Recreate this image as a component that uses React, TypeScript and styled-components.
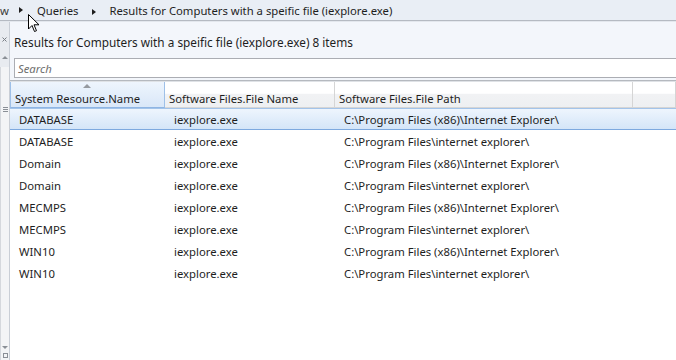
import styled, { createGlobalStyle } from "styled-components";

const GlobalStyle = createGlobalStyle`
  html, body {
    margin: 0;
    padding: 0;
    background: #ffffff;
  }
  body {
    font-family: "Noto Sans", "Open Sans", "Liberation Sans", sans-serif;
    font-size: 11.3px;
    color: #1e1e1e;
  }
`;

const Screen = styled.div`
  position: relative;
  width: 676px;
  height: 360px;
  display: flex;
  flex-direction: column;
  overflow: hidden;
`;

const Breadcrumbs = styled.div`
  height: 20px;
  display: flex;
  align-items: center;
  background: #e9eef5;
  border-bottom: 1px solid #b5bac2;
  box-shadow: 0 1px 0 #e3e7ed;
  white-space: nowrap;
  font-size: 11.3px;
  color: #1e1e1e;
`;

const Crumb = styled.span<{ $pad?: number }>`
  padding-left: ${(p) => p.$pad ?? 0}px;
`;

const LeadCrumb = styled.span`
  margin-left: 0;
  margin-right: 10px;
  color: #3a3a3a;
`;

const CrumbArrow = styled.span`
  display: inline-block;
  width: 0;
  height: 0;
  border-top: 3.5px solid transparent;
  border-bottom: 3.5px solid transparent;
  border-left: 4px solid #1e1e1e;
`;

const Body = styled.div`
  flex: 1;
  display: flex;
  min-height: 0;
  margin-top: 1px;
`;

const SideStrip = styled.div`
  width: 9px;
  border-right: 1px solid #c9ced6;
  background: #e8ebf0;
  display: flex;
  flex-direction: column;
  align-items: center;
`;

const Cross = styled.svg`
  margin-top: 15px;
`;

const UpTri = styled.span`
  margin-top: 14px;
  width: 0;
  height: 0;
  border-left: 3px solid transparent;
  border-right: 3px solid transparent;
  border-bottom: 3px solid #8a8f96;
`;

const StripTrack = styled.div`
  margin-top: 8px;
  width: 8px;
  flex: 1;
  background: #f3f4f6;
  border-left: 1px solid #d5d8dd;
  display: flex;
  flex-direction: column;
  align-items: center;
`;

const Grip = styled.span`
  margin-top: 40px;
  width: 5px;
  height: 5px;
  border-top: 1px solid #8a8f96;
  border-bottom: 1px solid #8a8f96;
  box-sizing: border-box;
  position: relative;
  &::after {
    content: "";
    position: absolute;
    left: 0;
    right: 0;
    top: 1px;
    border-top: 1px solid #8a8f96;
  }
`;

const Spacer = styled.div`
  flex: 1;
`;

const DownTri = styled.span`
  margin-bottom: 4px;
  width: 0;
  height: 0;
  border-left: 3px solid transparent;
  border-right: 3px solid transparent;
  border-top: 3px solid #8a8f96;
`;

const Square = styled.span`
  margin-bottom: 2px;
  width: 5px;
  height: 5px;
  border: 1px solid #8a8f96;
  box-sizing: border-box;
`;

const Panel = styled.div`
  flex: 1;
  display: flex;
  flex-direction: column;
  background: #f3f6fb;
`;

const Title = styled.div`
  height: 36px;
  display: flex;
  align-items: center;
  padding: 4px 0 0 4px;
  box-sizing: border-box;
  font-size: 11.8px;
  color: #1e1e1e;
`;

const Search = styled.div`
  margin-left: 4px;
  height: 18px;
  border: 1px solid #abadb3;
  border-right: none;
  background: #ffffff;
  display: flex;
  align-items: center;
  padding-left: 3px;
  font-style: italic;
  color: #6d6d6d;
`;

const Grid = styled.div`
  margin-top: 2px;
  flex: 1;
  background: #ffffff;
  border-top: 1px solid #b5b9bf;
  box-shadow: inset 0 1px 0 #dfe2e6;
  display: flex;
  flex-direction: column;
`;

const HeaderRow = styled.div`
  display: grid;
  grid-template-columns: 155px 170px 298px 1fr;
  height: 26px;
  margin-top: 1px;
`;

const HeaderCell = styled.div<{ $sorted?: boolean }>`
  position: relative;
  display: flex;
  align-items: flex-end;
  padding: 0 0 1px 4px;
  color: #1e1e1e;
  border-right: 1px solid #d5d5d5;
  border-bottom: 1px solid ${(p) => (p.$sorted ? "#8fb5e3" : "#d5d5d5")};
  background: ${(p) =>
    p.$sorted
      ? "linear-gradient(#eef5fd, #d9e7f8)"
      : "linear-gradient(#ffffff 0%, #ffffff 45%, #f1f2f4 50%, #eef0f2 100%)"};
  ${(p) => (p.$sorted ? "border-left: 1px solid #9ec0e8; border-right-color: #9ec0e8;" : "")}
`;

const SortArrow = styled.span`
  position: absolute;
  top: 2px;
  left: 72px;
  width: 0;
  height: 0;
  border-left: 4px solid transparent;
  border-right: 4px solid transparent;
  border-bottom: 4px solid #969aa0;
`;

const Row = styled.div<{ $selected?: boolean }>`
  display: grid;
  grid-template-columns: 155px 170px 298px 1fr;
  height: 22px;
  box-sizing: border-box;
  align-items: center;
  border-top: 1px solid ${(p) => (p.$selected ? "#a3c4ea" : "transparent")};
  border-bottom: 1px solid ${(p) => (p.$selected ? "#7da9df" : "transparent")};
  background: ${(p) => (p.$selected ? "linear-gradient(#eef5fd, #d4e5f8)" : "transparent")};
`;

const Cell = styled.div`
  padding-left: 9px;
  white-space: nowrap;
  overflow: hidden;
  color: #1e1e1e;
`;

const Cursor = styled.svg`
  position: absolute;
  left: 28px;
  top: 14px;
`;

const rows = [
  ["DATABASE", "iexplore.exe", "C:\\Program Files (x86)\\Internet Explorer\\"],
  ["DATABASE", "iexplore.exe", "C:\\Program Files\\internet explorer\\"],
  ["Domain", "iexplore.exe", "C:\\Program Files (x86)\\Internet Explorer\\"],
  ["Domain", "iexplore.exe", "C:\\Program Files\\internet explorer\\"],
  ["MECMPS", "iexplore.exe", "C:\\Program Files (x86)\\Internet Explorer\\"],
  ["MECMPS", "iexplore.exe", "C:\\Program Files\\internet explorer\\"],
  ["WIN10", "iexplore.exe", "C:\\Program Files (x86)\\Internet Explorer\\"],
  ["WIN10", "iexplore.exe", "C:\\Program Files\\internet explorer\\"],
];

export default function App() {
  return (
    <>
      <GlobalStyle />
      <Screen>
        <Breadcrumbs>
          <LeadCrumb>w</LeadCrumb>
          <CrumbArrow />
          <Crumb $pad={14}>Queries</Crumb>
          <Crumb $pad={14}>
            <CrumbArrow />
          </Crumb>
          <Crumb $pad={13}>Results for Computers with a speific file (iexplore.exe)</Crumb>
        </Breadcrumbs>
        <Body>
          <SideStrip>
            <Cross width="5" height="5" viewBox="0 0 5 5">
              <path d="M0.5 0.5 L4.5 4.5 M4.5 0.5 L0.5 4.5" stroke="#7a7f86" strokeWidth="1" />
            </Cross>
            <UpTri />
            <StripTrack>
              <Grip />
              <Spacer />
              <DownTri />
              <Square />
            </StripTrack>
          </SideStrip>
          <Panel>
            <Title>Results for Computers with a speific file (iexplore.exe) 8 items</Title>
            <Search>Search</Search>
            <Grid>
              <HeaderRow>
                <HeaderCell $sorted>
                  <SortArrow />
                  System Resource.Name
                </HeaderCell>
                <HeaderCell>Software Files.File Name</HeaderCell>
                <HeaderCell>Software Files.File Path</HeaderCell>
                <HeaderCell />
              </HeaderRow>
              {rows.map((r, i) => (
                <Row key={i} $selected={i === 0}>
                  <Cell>{r[0]}</Cell>
                  <Cell>{r[1]}</Cell>
                  <Cell>{r[2]}</Cell>
                  <Cell />
                </Row>
              ))}
            </Grid>
          </Panel>
        </Body>
        <Cursor width="12" height="19" viewBox="0 0 12 19">
          <path d="M0.5 0.5 L0.5 15 L4 11.5 L6.5 17.5 L8.5 16.7 L6 10.8 L11 10.8 Z" fill="#ffffff" stroke="#000000" strokeWidth="1" />
        </Cursor>
      </Screen>
    </>
  );
}
